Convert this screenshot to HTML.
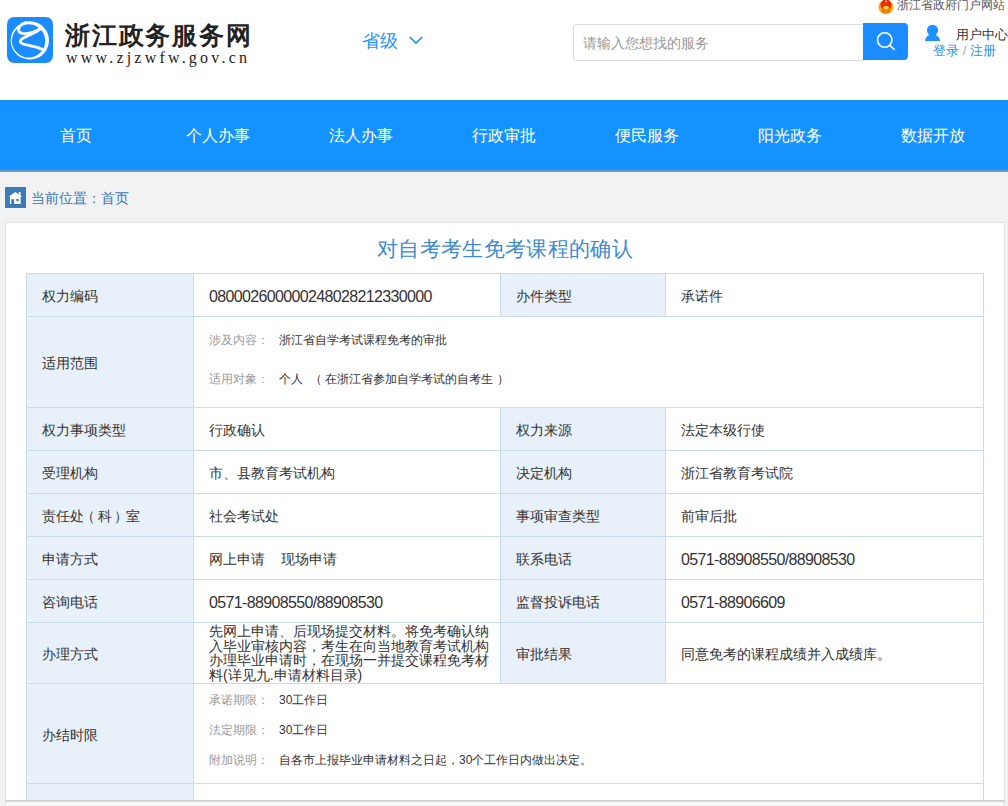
<!DOCTYPE html>
<html><head><meta charset="utf-8">
<style>
*{margin:0;padding:0;box-sizing:border-box}
html,body{width:1008px;height:806px;overflow:hidden;background:#f2f2f2;font-family:"Liberation Sans",sans-serif;color:#333}
.abs{position:absolute}
#hdr{position:absolute;left:0;top:0;width:1008px;height:100px;background:#fff}
#logo{left:7px;top:17px;width:46px;height:46px}
#lt{left:65px;top:19px;font-family:"Liberation Serif",serif;font-weight:bold;font-size:25px;letter-spacing:1.8px;line-height:34px;color:#222;white-space:nowrap}
#lu{left:66px;top:49px;font-family:"Liberation Serif",serif;font-size:16px;line-height:18px;color:#222;letter-spacing:3.2px;white-space:nowrap}
#prov{left:362px;top:29px;font-size:18px;line-height:24px;color:#1e90ff;white-space:nowrap}
#srch{left:573px;top:24px;width:291px;height:37px;border:1px solid #ddd;border-radius:3px 0 0 3px;background:#fff}
#ph{left:583px;top:33px;font-size:14px;line-height:20px;color:#999;white-space:nowrap}
#sbtn{left:863px;top:23px;width:45px;height:37px;background:#1a8cff;border-radius:0 4px 4px 0}
#gov{left:897px;top:-3px;font-size:12px;line-height:16px;color:#555;white-space:nowrap}
#uc{left:956px;top:26px;font-size:13px;line-height:17px;color:#333;white-space:nowrap}
#lr{left:933px;top:42px;font-size:13px;line-height:17px;color:#1e90ff;white-space:nowrap}
#nav{position:absolute;left:0;top:100px;width:1008px;height:72px;background:#1492ff;border-bottom:2px solid #6a9dcc}
#nav div{position:absolute;top:25px;width:143px;text-align:center;color:#fff;font-size:16px;line-height:22px;white-space:nowrap}
#crumb{left:5px;top:187px;width:21px;height:21px;background:#3b7bb6}
#ctext{left:31px;top:188px;font-size:14px;line-height:20px;color:#3a77b3;white-space:nowrap}
#panel{position:absolute;left:5px;top:222px;width:1000px;height:600px;background:#fff;border:1px solid #e3e3e3}
#title{position:absolute;left:0;top:11px;width:998px;text-align:center;font-size:21px;line-height:30px;letter-spacing:0.35px;color:#3d8ad0}
table{position:absolute;left:20px;top:50px;width:958px;border-collapse:collapse;table-layout:fixed}
td{border:1px solid #c9dcee;font-size:14px;color:#333;padding:4px 0 0 15px;vertical-align:middle;white-space:nowrap}
td.h{background:#e8f0f9}
.po{position:relative;left:-2.7px}.pc{position:relative;left:1.6px}
.num{font-size:16px;letter-spacing:-0.65px}
.sm{font-size:12px;color:#333}
.lb{color:#999;display:inline-block;width:70px}
td.sc{vertical-align:top;padding-top:14px}
.sl{font-size:12px;line-height:18px}
td.wrap{white-space:normal;padding-right:10px;padding-top:0;vertical-align:top}
td.wrap div{font-size:14px;line-height:14.5px;width:282px;margin-top:1px}
#bot1{left:5px;top:800px;width:1000px;height:2px;background:linear-gradient(#d0d0d0,#d8d8d8)}
#bot2{left:5px;top:802px;width:1000px;height:4px;background:#f8f8f8;border-left:1px solid #e6e6e6;border-right:1px solid #e3e3e3}
</style></head><body>
<div id="hdr"></div>
<svg id="logo" class="abs" viewBox="0 0 806 806" width="46" height="46">
<rect x="0" y="0" width="806" height="806" rx="125" fill="#1a8cff"/>
<path fill="#fff" fill-rule="evenodd" d="M400 75 A335 335 0 1 1 399.9 75 Z M378 127 A291 291 0 1 0 378.1 127 Z"/>
<path d="M150 60 L260 160" stroke="#1a8cff" stroke-width="34" fill="none"/>
<g fill="none" stroke="#fff" stroke-linecap="round">
<path d="M330 100 C200 140, 150 270, 270 288 C380 302, 520 250, 600 195" stroke-width="50"/>
<path d="M600 195 C480 300, 300 340, 250 395 C205 450, 270 478, 360 492 C480 512, 570 540, 650 578" stroke-width="50"/>
</g>
</svg>
<div id="lt" class="abs">浙江政务服务网</div>
<div id="lu" class="abs">www.zjzwfw.gov.cn</div>
<div id="prov" class="abs">省级</div>
<svg class="abs" style="left:409px;top:36px" width="14" height="9" viewBox="0 0 14 9"><path d="M0.8 1 L7 7 L13.2 1" fill="none" stroke="#1e90ff" stroke-width="1.7"/></svg>
<div id="srch" class="abs"></div>
<div id="ph" class="abs">请输入您想找的服务</div>
<div id="sbtn" class="abs"></div>
<svg class="abs" style="left:875px;top:30px" width="22" height="22" viewBox="0 0 22 22"><circle cx="9.7" cy="10" r="7.2" fill="none" stroke="#fff" stroke-width="1.6"/><path d="M14.8 15.3 L19.2 19.3" stroke="#fff" stroke-width="1.7" stroke-linecap="round"/></svg>
<svg class="abs" style="left:878px;top:-1px" width="16" height="16" viewBox="0 0 16 16"><ellipse cx="8" cy="8" rx="7.6" ry="7" fill="#f2b01e"/><ellipse cx="8" cy="6" rx="5.6" ry="5.4" fill="#ec2a0c"/><ellipse cx="8" cy="12" rx="5.2" ry="2.8" fill="#ee8a18"/><ellipse cx="8" cy="8.6" rx="3" ry="1.7" fill="#f4ec10"/><circle cx="8" cy="2.6" r="1" fill="#f8e060"/><circle cx="6" cy="12" r="0.8" fill="#e04010"/><circle cx="10" cy="12" r="0.8" fill="#e04010"/></svg>
<div id="gov" class="abs">浙江省政府门户网站</div>
<svg class="abs" style="left:925px;top:24px" width="15" height="17" viewBox="0 0 15 17"><circle cx="7.5" cy="6.3" r="5.6" fill="#1e90ff"/><path d="M0 17 Q0.5 10.5 7.5 10.5 Q14.5 10.5 15 17 Z" fill="#1e90ff"/></svg>
<div id="uc" class="abs">用户中心</div>
<div id="lr" class="abs">登录 <span style="color:#aaa">/</span> 注册</div>
<div id="nav">
<div style="left:4px">首页</div>
<div style="left:146px">个人办事</div>
<div style="left:289px">法人办事</div>
<div style="left:432px">行政审批</div>
<div style="left:575px">便民服务</div>
<div style="left:718px">阳光政务</div>
<div style="left:861px">数据开放</div>
</div>
<div id="crumb" class="abs"><svg width="21" height="21" viewBox="0 0 21 21" style="display:block"><path d="M3.8 9.5 L10.3 4.9 L13.8 7.3 L13.8 4.9 L15.6 4.9 L15.6 8.3 L17.2 9.5 L15.7 9.5 L15.7 17 L4.9 17 L4.9 9.5 Z" fill="#fff"/><rect x="6.3" y="12.2" width="2.8" height="4.8" fill="#3b7bb6"/><rect x="11.3" y="12" width="2.4" height="2" fill="#3b7bb6"/></svg></div>
<div id="ctext" class="abs">当前位置：首页</div>
<div id="panel">
<div id="title">对自考考生免考课程的确认</div>
<table>
<colgroup><col style="width:167px"><col style="width:307px"><col style="width:165px"><col style="width:318px"></colgroup>
<tr style="height:43px"><td class="h">权力编码</td><td><span class="num">080002600000248028212330000</span></td><td class="h">办件类型</td><td>承诺件</td></tr>
<tr style="height:91px"><td class="h">适用范围</td><td colspan="3" class="sc"><div class="sl"><span class="lb">涉及内容：</span>浙江省自学考试课程免考的审批</div><div class="sl" style="margin-top:21px"><span class="lb">适用对象：</span>个人<span style="margin-left:10px"><span class="po">（</span>在浙江省参加自学考试的自考生<span class="pc" style="left:3.5px">）</span></span></div></td></tr>
<tr style="height:43px"><td class="h">权力事项类型</td><td>行政确认</td><td class="h">权力来源</td><td>法定本级行使</td></tr>
<tr style="height:43px"><td class="h">受理机构</td><td>市、县教育考试机构</td><td class="h">决定机构</td><td>浙江省教育考试院</td></tr>
<tr style="height:43px"><td class="h">责任处<span class="po">（</span>科<span class="pc">）</span>室</td><td>社会考试处</td><td class="h">事项审查类型</td><td>前审后批</td></tr>
<tr style="height:43px"><td class="h">申请方式</td><td>网上申请<span style="margin-left:16px">现场申请</span></td><td class="h">联系电话</td><td><span class="num">0571-88908550/88908530</span></td></tr>
<tr style="height:43px"><td class="h">咨询电话</td><td><span class="num">0571-88908550/88908530</span></td><td class="h">监督投诉电话</td><td><span class="num">0571-88906609</span></td></tr>
<tr style="height:61px"><td class="h">办理方式</td><td class="wrap"><div>先网上申请、后现场提交材料。将免考确认纳入毕业审核内容，考生在向当地教育考试机构办理毕业申请时，在现场一并提交课程免考材料(详见九.申请材料目录)</div></td><td class="h">审批结果</td><td>同意免考的课程成绩并入成绩库。</td></tr>
<tr style="height:100px"><td class="h">办结时限</td><td colspan="3" class="sc" style="padding-top:7px"><div class="sl"><span class="lb">承诺期限：</span>30工作日</div><div class="sl" style="margin-top:12px"><span class="lb">法定期限：</span>30工作日</div><div class="sl" style="margin-top:12px"><span class="lb">附加说明：</span>自各市上报毕业申请材料之日起，30个工作日内做出决定。</div></td></tr>
<tr style="height:40px"><td class="h"></td><td colspan="3"></td></tr>
</table>
</div>
<div id="bot1" class="abs"></div>
<div id="bot2" class="abs"></div>
</body></html>
